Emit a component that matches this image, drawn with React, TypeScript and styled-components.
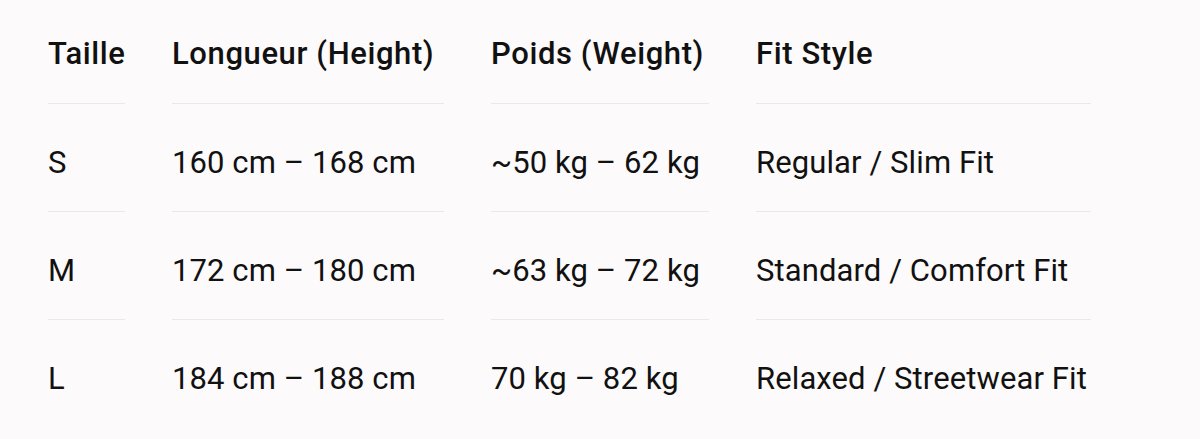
import React from 'react';
import styled, {createGlobalStyle} from 'styled-components';

const GlobalStyle = createGlobalStyle`
  html, body {
    margin: 0;
    padding: 0;
    background: #fdfafb;
  }
  body {
    font-family: Roboto, "Noto Sans", sans-serif;
    color: #111111;
  }
`;

const rows = [
  ['S', '160 cm – 168 cm', '~50 kg – 62 kg', 'Regular / Slim Fit'],
  ['M', '172 cm – 180 cm', '~63 kg – 72 kg', 'Standard / Comfort Fit'],
  ['L', '184 cm – 188 cm', '70 kg – 82 kg', 'Relaxed / Streetwear Fit'],
];

const headers = ['Taille', 'Longueur (Height)', 'Poids (Weight)', 'Fit Style'];

const App = () => {
  return (
    <Page>
      <GlobalStyle />
      <Table>
        {headers.map((h) => (
          <HeadCell key={h}>{h}</HeadCell>
        ))}
        {rows.map((row, i) =>
          row.map((cell, j) => (
            <Cell key={`${i}-${j}`} $last={i === rows.length - 1}>
              {cell}
            </Cell>
          ))
        )}
      </Table>
    </Page>
  );
};

export default App;

const Page = styled.div`
  width: 1200px;
  height: 439px;
  padding: 0 48px;
  box-sizing: border-box;
  overflow: hidden;
`;

const Table = styled.div`
  display: grid;
  grid-template-columns: 77px 272px 218px 335px;
  column-gap: 47px;
`;

const HeadCell = styled.div`
  height: 104px;
  box-sizing: border-box;
  display: flex;
  align-items: center;
  padding-top: 4px;
  border-bottom: 1px solid #ebe8e9;
  font-size: 31px;
  font-weight: 500;
  letter-spacing: 0.6px;
  white-space: nowrap;
`;

const Cell = styled.div<{$last?: boolean}>`
  height: 108px;
  box-sizing: border-box;
  display: flex;
  align-items: center;
  padding-top: 9px;
  border-bottom: 1px solid ${(p) => (p.$last ? 'transparent' : '#ebe8e9')};
  font-size: 31px;
  font-weight: 400;
  letter-spacing: 0.1px;
  white-space: nowrap;
`;
